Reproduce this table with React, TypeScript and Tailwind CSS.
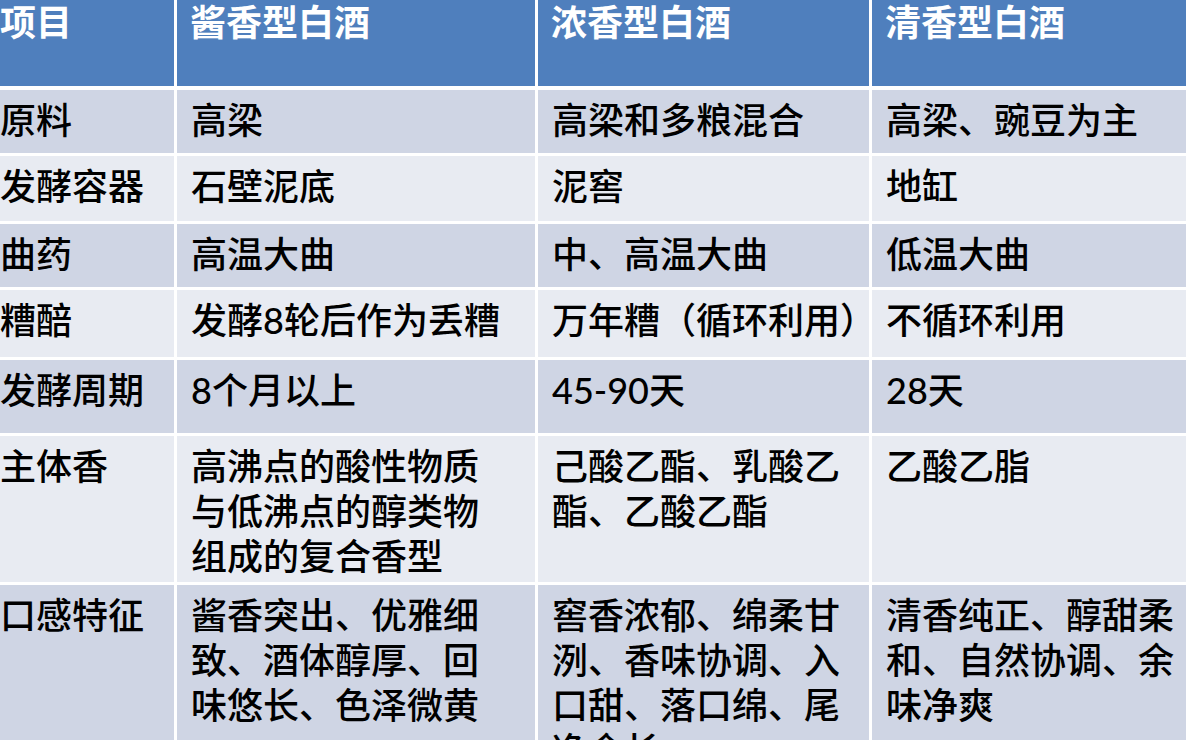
import React from 'react';

type Row = { label: string; cells: string[][]; h: string; tone: 'dark' | 'light' };

const headers = ['项目', '酱香型白酒', '浓香型白酒', '清香型白酒'];

const rows: Row[] = [
  { label: '原料', cells: [['高梁'], ['高梁和多粮混合'], ['高梁、豌豆为主']], h: 'h-[63px]', tone: 'dark' },
  { label: '发酵容器', cells: [['石壁泥底'], ['泥窖'], ['地缸']], h: 'h-[65px]', tone: 'light' },
  { label: '曲药', cells: [['高温大曲'], ['中、高温大曲'], ['低温大曲']], h: 'h-[63px]', tone: 'dark' },
  { label: '糟醅', cells: [['发酵8轮后作为丢糟'], ['万年糟（循环利用）'], ['不循环利用']], h: 'h-[67px]', tone: 'light' },
  { label: '发酵周期', cells: [['8个月以上'], ['45-90天'], ['28天']], h: 'h-[73px]', tone: 'dark' },
  {
    label: '主体香',
    cells: [
      ['高沸点的酸性物质', '与低沸点的醇类物', '组成的复合香型'],
      ['己酸乙酯、乳酸乙', '酯、乙酸乙酯'],
      ['乙酸乙脂'],
    ],
    h: 'h-[146px]',
    tone: 'light',
  },
  {
    label: '口感特征',
    cells: [
      ['酱香突出、优雅细', '致、酒体醇厚、回', '味悠长、色泽微黄'],
      ['窖香浓郁、绵柔甘', '洌、香味协调、入', '口甜、落口绵、尾', '净余长'],
      ['清香纯正、醇甜柔', '和、自然协调、余', '味净爽'],
    ],
    h: 'h-[200px]',
    tone: 'dark',
  },
];

const font = "font-['Lato','Noto_Sans_CJK_SC',sans-serif]";

export default function App() {
  return (
    <div className={`w-[1186px] h-[740px] overflow-hidden bg-white ${font}`}>
      <div className="grid grid-cols-[174px_358px_331px_1fr] gap-x-[3px]">
        {headers.map((h, i) => (
          <div
            key={h}
            className={`h-[86px] bg-[#4f7fbd] text-white font-bold text-[36px] leading-[44px] ${
              i === 0 ? 'pl-0' : 'pl-[13px]'
            }`}
          >
            {h}
          </div>
        ))}
      </div>
      <div className="flex flex-col gap-y-[3px] pt-[4px]">
        {rows.map((row) => {
          const bg = row.tone === 'dark' ? 'bg-[#cfd5e4]' : 'bg-[#e8ebf2]';
          return (
            <div key={row.label} className={`grid grid-cols-[174px_358px_331px_1fr] gap-x-[3px] ${row.h}`}>
              <div className={`${bg} pt-[8px] pl-0 text-[36px] leading-[45px] font-medium text-black`}>
                {row.label}
              </div>
              {row.cells.map((lines, ci) => (
                <div
                  key={ci}
                  className={`${bg} pt-[8px] pl-[14px] text-[36px] leading-[45px] font-medium text-black whitespace-nowrap`}
                >
                  {lines.map((l) => (
                    <div key={l}>{l}</div>
                  ))}
                </div>
              ))}
            </div>
          );
        })}
      </div>
    </div>
  );
}
